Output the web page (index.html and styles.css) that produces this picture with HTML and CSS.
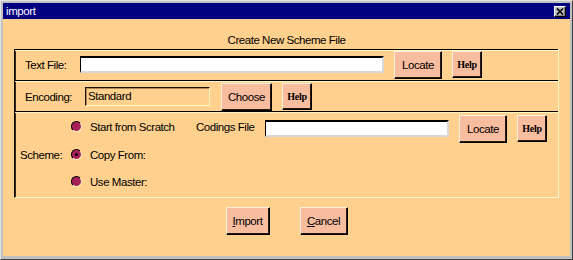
FILE: index.html
```html
<!DOCTYPE html>
<html>
<head>
<meta charset="utf-8">
<title>import</title>
<link rel="stylesheet" href="styles.css">
</head>
<body>
<div class="window">
  <div class="titlebar">
    <span class="title">import</span>
    <button class="close" aria-label="Close">
      <svg width="8" height="7" viewBox="0 0 8 7"><path d="M1 0.5 L7 6.5 M7 0.5 L1 6.5" stroke="#000" stroke-width="1.7" fill="none"/></svg>
    </button>
  </div>
  <div class="body">
    <div class="heading">Create New Scheme File</div>
    <div class="frame">
      <div class="row row-text">
        <span class="label lbl-text">Text File:</span>
        <div class="input input-text"></div>
        <button class="btn btn-locate">Locate</button>
        <button class="btn btn-help">Help</button>
      </div>
      <div class="row row-enc">
        <span class="label lbl-enc">Encoding:</span>
        <div class="field">Standard</div>
        <button class="btn btn-choose">Choose</button>
        <button class="btn btn-help">Help</button>
      </div>
      <div class="row row-scheme">
        <span class="label lbl-scheme">Scheme:</span>
        <div class="options">
          <div class="opt opt-first">
            <span class="radio"></span>
            <span class="opt-text opt-text-first">Start from Scratch</span>
            <span class="opt-text lbl-codings">Codings File</span>
            <div class="input input-codings"></div>
            <button class="btn btn-locate">Locate</button>
            <button class="btn btn-help">Help</button>
          </div>
          <div class="opt">
            <span class="radio checked"></span>
            <span class="opt-text">Copy From:</span>
          </div>
          <div class="opt">
            <span class="radio"></span>
            <span class="opt-text">Use Master:</span>
          </div>
        </div>
      </div>
    </div>
    <div class="footer">
      <button class="btn btn-import"><u>I</u>mport</button>
      <button class="btn btn-cancel"><u>C</u>ancel</button>
    </div>
  </div>
</div>
</body>
</html>
```

FILE: styles.css
```css
html, body {
  margin: 0;
  padding: 0;
}
body {
  width: 573px;
  height: 260px;
  overflow: hidden;
  font-family: "Liberation Sans", Arial, sans-serif;
  font-size: 11.5px;
  letter-spacing: -0.45px;
  color: #000;
  background: #c0c0c0;
}
.window {
  box-sizing: border-box;
  width: 573px;
  height: 260px;
  background: #c0c0c0;
  border: 1px solid;
  border-color: #e4e4e4 #404040 #404040 #e4e4e4;
  padding: 2px 2px 3px 2px;
  display: flex;
  flex-direction: column;
}
.titlebar {
  height: 16px;
  flex: none;
  background: #000080;
  color: #fff;
  display: flex;
  align-items: center;
  justify-content: space-between;
  padding: 0 4px 0 3px;
}
.title {
  font-size: 11.5px;
  line-height: 16px;
  letter-spacing: -0.4px;
}
.close {
  box-sizing: border-box;
  width: 12px;
  height: 11px;
  padding: 0;
  margin: 0;
  border: 1px solid;
  border-color: #fff #000 #000 #fff;
  box-shadow: inset -1px -1px 0 #808080;
  background: #c0c0c0;
  display: flex;
  align-items: center;
  justify-content: center;
}
.close svg {
  display: block;
}
.body {
  box-sizing: border-box;
  height: 237px;
  background: #ffd08e;
  padding: 0 11px;
  display: flex;
  flex-direction: column;
}
.heading {
  box-sizing: border-box;
  height: 30px;
  padding-top: 14px;
  line-height: 14px;
  text-align: center;
}
.frame {
  border-left: 1px solid #000;
  border-right: 1px solid #fff6c8;
  border-bottom: 1px solid #fff6c8;
}
.row {
  display: flex;
  align-items: flex-start;
  border-top: 1px solid #000;
  box-shadow: inset 0 1px 0 #fff6c8, inset 1px 0 0 #3a2a14;
}
.row-text {
  height: 30px;
  padding-left: 10px;
}
.row-enc {
  height: 30px;
  padding-left: 10px;
}
.row-scheme {
  height: 85px;
  padding-left: 5px;
}
.label {
  line-height: 14px;
  white-space: nowrap;
}
.lbl-text {
  width: 55px;
  margin-top: 8px;
}
.lbl-enc {
  width: 60px;
  margin-top: 9px;
}
.lbl-scheme {
  width: 52px;
  align-self: center;
}
.input {
  box-sizing: border-box;
  height: 17px;
  background: #fff;
  border-style: solid;
  border-width: 2px 2px 2px 1px;
  border-color: #000 #d8d8d8 #d8d8d8 #000;
}
.input-text {
  width: 304px;
  margin-top: 6px;
}
.field {
  box-sizing: border-box;
  width: 125px;
  height: 19px;
  margin-top: 6px;
  border: 1px solid;
  border-color: #1a1208 #fff6c8 #fff6c8 #1a1208;
  box-shadow: inset 1px 1px 0 #b08858;
  padding-left: 2px;
  line-height: 17px;
}
.btn {
  box-sizing: border-box;
  flex: none;
  height: 28px;
  padding: 0;
  margin: 0;
  border: 1px solid;
  border-color: #fff0dc #000 #000 #fff0dc;
  box-shadow: inset -1px -1px 0 #2a1a10;
  background: #f8bc9e;
  color: #000;
  font: inherit;
  letter-spacing: inherit;
  text-align: center;
}
.btn-locate {
  width: 48px;
}
.btn-help {
  width: 30px;
  height: 27px;
  margin-left: 10px;
  font-family: "Liberation Serif", "Times New Roman", serif;
  font-weight: bold;
  font-size: 10px;
  letter-spacing: -0.3px;
}
.btn-choose {
  width: 51px;
}
.row-text .btn-locate {
  margin-left: 10px;
  margin-top: 1px;
}
.row-text .btn-help {
  margin-top: 1px;
}
.row-enc .btn-choose {
  margin-left: 11px;
  margin-top: 2px;
}
.row-enc .btn-help {
  margin-top: 2px;
}
.options {
  display: flex;
  flex-direction: column;
}
.opt {
  display: flex;
  align-items: flex-start;
  height: 27px;
}
.opt-first {
  height: 31px;
}
.radio {
  box-sizing: border-box;
  flex: none;
  width: 11px;
  height: 11px;
  margin-top: 6px;
  margin-left: -1px;
  border-radius: 50%;
  background: #a8205a;
  border: 1.5px solid;
  border-color: #000 #fff3c0 #fff3c0 #000;
  display: flex;
  align-items: center;
  justify-content: center;
}
.radio.checked::after {
  content: "";
  width: 3px;
  height: 3px;
  border-radius: 50%;
  background: #000;
}
.opt-first .radio {
  margin-top: 9px;
}
.opt-text {
  margin-left: 8px;
  margin-top: 5px;
  line-height: 14px;
  white-space: nowrap;
}
.opt-first .opt-text {
  margin-top: 8px;
}
.opt-text-first {
  width: 106px;
}
.lbl-codings {
  margin-left: 0;
  width: 69px;
}
.input-codings {
  width: 184px;
  margin-top: 8px;
}
.opt-first .btn-locate {
  margin-left: 10px;
  margin-top: 3px;
}
.opt-first .btn-help {
  margin-top: 3px;
}
.footer {
  flex: 1;
  display: flex;
  justify-content: center;
  align-items: flex-start;
  gap: 30px;
  padding-top: 9px;
}
.btn-import {
  width: 44px;
}
.btn-cancel {
  width: 48px;
}
```
